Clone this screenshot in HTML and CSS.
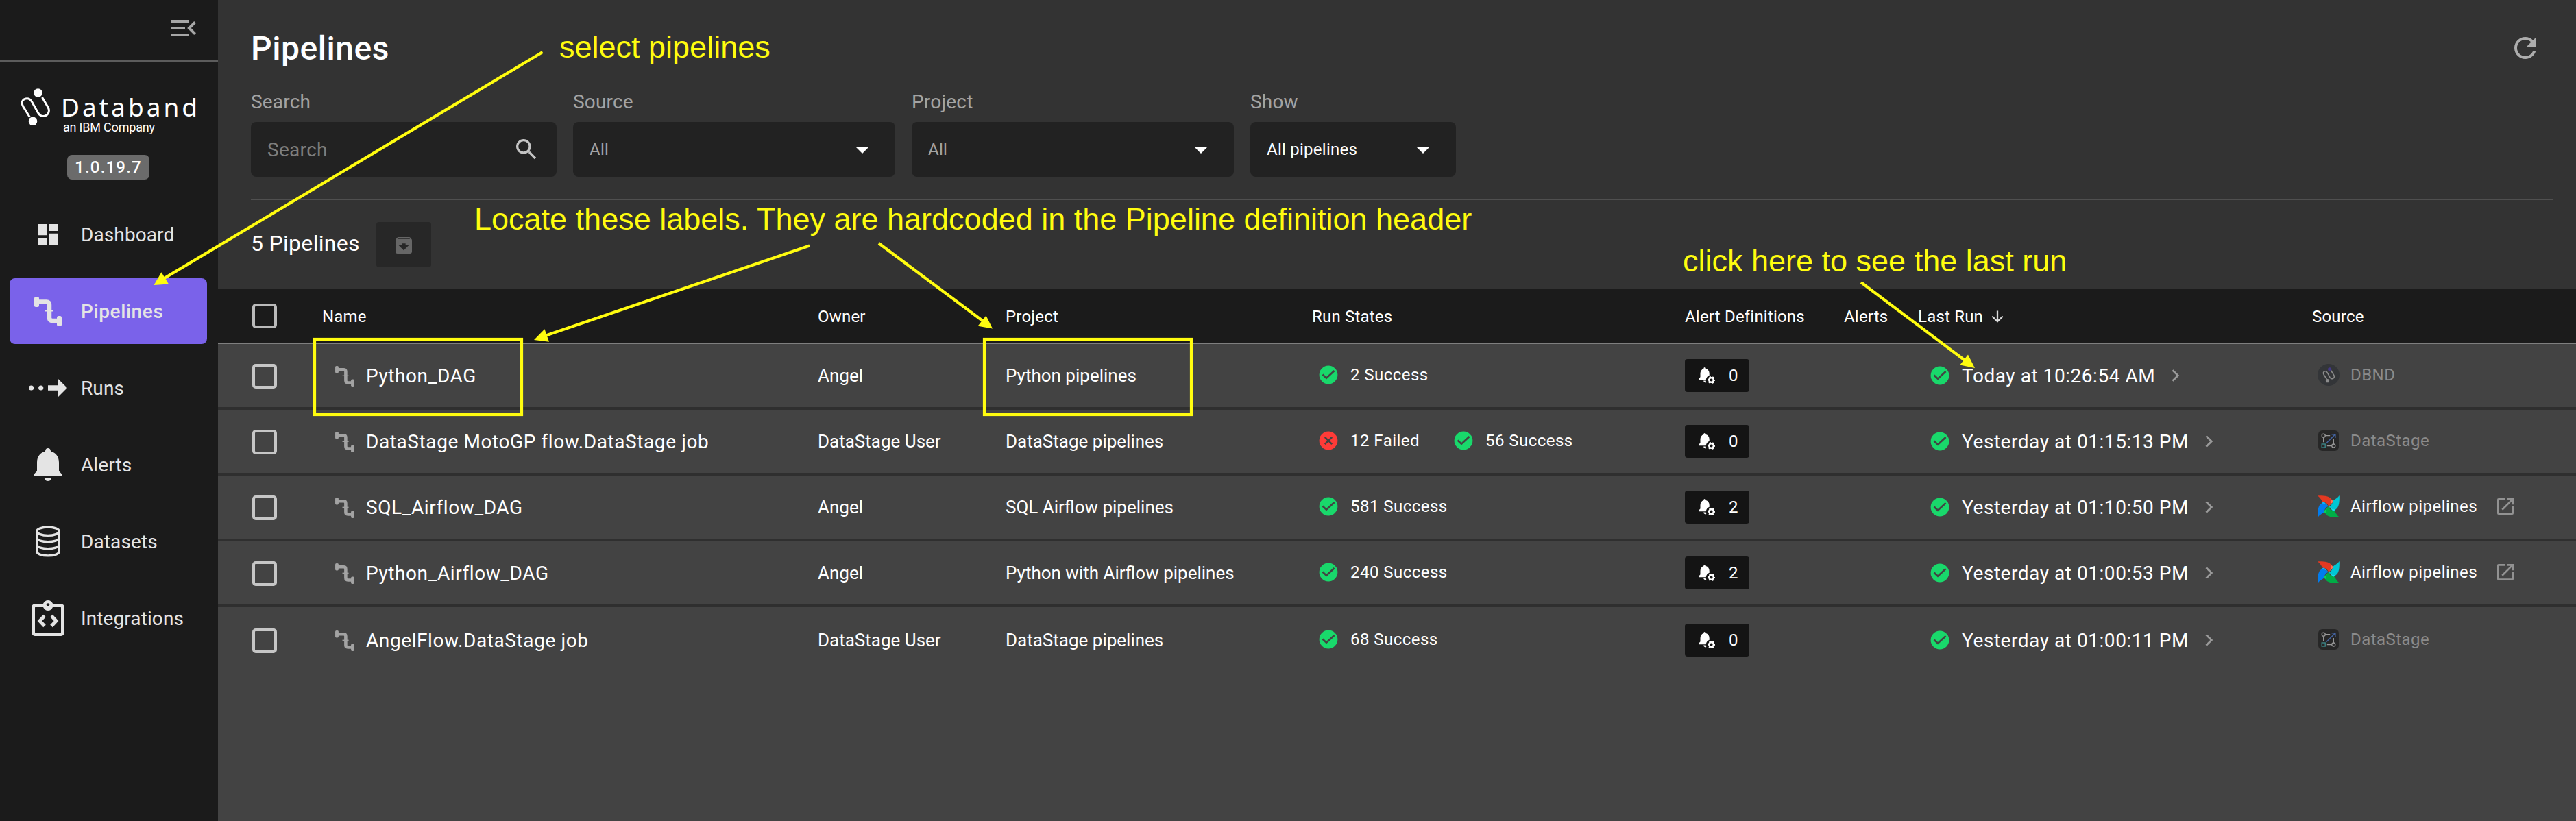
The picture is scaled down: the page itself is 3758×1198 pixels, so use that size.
FILE: index.html
```html
<!DOCTYPE html>
<html lang="en">
<head>
<meta charset="utf-8">
<title>Databand - Pipelines</title>
<link rel="stylesheet" href="styles.css">
</head>
<body>
<svg class="sprite" aria-hidden="true">
  <symbol id="pipe" viewBox="0 0 40 43">
    <path d="M4 7.5H17.500q4.500 0 4.500 4.500V30.500q0 4.500 4.500 4.500H36" fill="none" stroke="currentColor" stroke-width="6.500"/>
    <rect x="0" y="0" width="7" height="15" rx="2.500" fill="currentColor"/>
    <rect x="33" y="28" width="7" height="15" rx="2.500" fill="currentColor"/>
    <path d="M15 20.500h13" stroke="currentColor" stroke-width="2"/>
  </symbol>
  <symbol id="ok" viewBox="0 0 32 32">
    <circle cx="16" cy="16" r="13.400" fill="#19d86b"/>
    <path d="M7.500 15.500l5.500 5.300L24.600 10" fill="none" stroke="#434343" stroke-width="2.600"/>
  </symbol>
  <symbol id="fail" viewBox="0 0 32 32">
    <circle cx="16" cy="16" r="13.400" fill="#ff3b38"/>
    <path d="M10.800 10.800l10.400 10.400M21.200 10.800L10.800 21.200" stroke="#434343" stroke-width="2.600"/>
  </symbol>
  <symbol id="bellcog" viewBox="0 0 24 24">
    <path fill="#fff" d="M9 0c1.200 0 1.800.9 1.800 2.100C14 3.100 15.700 6 15.700 9.300v2.400a7.600 7.600 0 0 0-4.900 6.500H0v-1.300l2.500-2.600V9.300C2.500 6 4.200 3.100 7.300 2.100 7.300.9 7.900 0 9 0zM7.200 19.600h3.500a8 8 0 0 0 .6 2.400c-1.800 1.100-4.100-.2-4.100-2.400z"/>
    <circle cx="18.500" cy="18.500" r="3.300" fill="none" stroke="#fff" stroke-width="2.400"/>
    <circle cx="18.500" cy="18.500" r="4.600" fill="none" stroke="#fff" stroke-width="1.900" stroke-dasharray="2.408" stroke-dashoffset="1.200"/>
  </symbol>
  <symbol id="chev" viewBox="0 0 12 18"><path d="M1.500 1.200L9.300 9l-7.800 7.800" fill="none" stroke="#9a9a9a" stroke-width="2.800"/></symbol>
  <symbol id="ext" viewBox="0 0 24 24"><path fill="#929292" d="M19 19H5V5h7V3H4.500A1.500 1.500 0 0 0 3 4.500v15A1.500 1.500 0 0 0 4.500 21h15a1.500 1.500 0 0 0 1.500-1.500V12h-2v7zM14 3v2h3.590l-9.830 9.830 1.410 1.410L19 6.410V10h2V3h-7z"/></symbol>
  <symbol id="airflow" viewBox="0 0 32 32">
    <g fill="#e43921"><path id="blade" d="M0 .2C8 0 17.500.2 20.500 5.800c.4 3.400-2.400 7.400-4.500 10.200-.6-3.200-3.500-6-8.300-6.200C6 7.500 3.500 2.500 0 .2z"/></g>
    <use href="#blade" fill="#00c7d4" transform="rotate(90 16 16)"/>
    <use href="#blade" fill="#00ad46" transform="rotate(180 16 16)"/>
    <use href="#blade" fill="#017cee" transform="rotate(270 16 16)"/>
    <path d="M20.200 5.800c1.600.9 2.300 2.300 2.300 3.800L16 16c2.200-2.800 4.500-6.500 4.200-10.200z" fill="#ff7557"/>
    <path d="M20.200 5.800c1.600.9 2.300 2.300 2.300 3.800L16 16c2.200-2.800 4.500-6.500 4.200-10.200z" fill="#11e1ee" transform="rotate(90 16 16)"/>
    <path d="M20.200 5.800c1.600.9 2.300 2.300 2.300 3.800L16 16c2.200-2.800 4.500-6.500 4.200-10.200z" fill="#04d659" transform="rotate(180 16 16)"/>
    <path d="M20.200 5.800c1.600.9 2.300 2.300 2.300 3.800L16 16c2.200-2.800 4.500-6.500 4.200-10.200z" fill="#0cb6ff" transform="rotate(270 16 16)"/>
  </symbol>
  <symbol id="stage" viewBox="0 0 32 32">
    <rect x="1" y="1" width="30" height="30" rx="6" fill="#272727"/>
    <g fill="none" stroke="#999" stroke-width="1.300">
      <circle cx="8.700" cy="8.700" r="2.500"/><path d="M11.200 8.700h7M8.700 11.200v7"/>
      <circle cx="23.300" cy="23.500" r="2.500"/><path d="M20.800 23.500h-7M23.300 21v-7"/>
    </g>
    <rect x="6.200" y="21" width="5" height="5" fill="none" stroke="#3c8588" stroke-width="1.400"/>
    <path d="M13 19.500L25.500 7M20.500 6.800h5.300v5.300" fill="none" stroke="#4465a3" stroke-width="1.500"/>
  </symbol>
  <symbol id="dbnd" viewBox="0 0 32 32">
    <circle cx="16" cy="16" r="16" fill="#333538"/>
    <path d="M13.500 22.500L9 15.500c-2-3.500 2.500-7 5-3.200l4.300 7.800c2 3.400 7.500.8 5.600-3.600L19.500 9.500" fill="none" stroke="#8c8c8c" stroke-width="1.500"/>
    <circle cx="17.700" cy="7.800" r="2.600" fill="#443a86"/><circle cx="14.500" cy="24.700" r="2.600" fill="#8c8c8c"/>
  </symbol>
</svg>

<div class="app">
  <aside class="side">
    <div class="side-top">
      <svg width="48" height="48" viewBox="0 0 24 24" fill="#a6a6a6"><path d="M3 18h13v-2H3v2zm0-12v2h13V6H3zm0 7h10v-2H3v2zm18 2.590L17.420 12 21 8.410 19.590 7l-5 5 5 5L21 15.590z"/></svg>
    </div>
    <div class="brand">
      <svg width="44" height="56" viewBox="0 0 44 56">
        <path d="M13.500 42L3.800 26.500C-.5 19 4.500 14.700 9.500 14.700c2.800 0 5 1.500 6.700 4.400l9.300 16.300c2 3.500 4.600 5 7.500 5 6.500 0 10.300-6 7.300-12.400L31.500 13" fill="none" stroke="#fff" stroke-width="3"/>
        <circle cx="25.500" cy="6.500" r="6.300" fill="#fff"/><circle cx="18" cy="47.800" r="6.300" fill="#fff"/>
      </svg>
      <div class="brand-text"><span class="brand-name">Databand</span><span class="brand-sub">an IBM Company</span></div>
    </div>
    <div class="version">1.0.19.7</div>
    <nav class="nav">
      <a class="nav-item"><span class="nav-icon"><svg width="40" height="40" viewBox="0 0 24 24" fill="currentColor"><path d="M3 12.700h8V3H3v9.700zM3 21h8v-6H3v6zm10 0h8V11.200h-8V21zM13 3v6h8V3h-8z"/></svg></span>Dashboard</a>
      <a class="nav-item active"><span class="nav-icon"><svg width="40" height="43"><use href="#pipe"/></svg></span>Pipelines</a>
      <a class="nav-item"><span class="nav-icon"><svg width="56" height="28" viewBox="0 0 56 28" fill="currentColor"><circle cx="3.600" cy="14" r="3.600"/><circle cx="17.700" cy="14" r="3.600"/><path d="M28 10.300h14V0l14 14-14 14V17.700H28z"/></svg></span>Runs</a>
      <a class="nav-item"><span class="nav-icon"><svg width="42" height="48" viewBox="0 0 42 48" fill="currentColor"><path d="M21 0c2.500 0 4 1.700 4 4.600C32.500 6.500 37 12.500 37 21v12c0 1.500 5 4 5 7.500H0C0 37 5 34.500 5 33V21C5 12.500 9.500 6.500 17 4.600 17 1.700 18.500 0 21 0zM15.800 43h10.400c0 6.600-10.400 6.600-10.400 0z"/></svg></span>Alerts</a>
      <a class="nav-item"><span class="nav-icon"><svg width="36" height="46" viewBox="0 0 36 46" fill="none" stroke="currentColor" stroke-width="3.400"><ellipse cx="18" cy="8.200" rx="16.200" ry="6.200"/><path d="M1.800 8.200v29.500c0 8.200 32.400 8.200 32.400 0V8.200M1.800 17.500c0 8.200 32.400 8.200 32.400 0M1.800 27.500c0 8.200 32.400 8.200 32.400 0"/></svg></span>Datasets</a>
      <a class="nav-item"><span class="nav-icon"><svg width="48" height="52" viewBox="0 0 48 52"><rect x="2.500" y="7.500" width="43" height="42" rx="3" fill="none" stroke="currentColor" stroke-width="5"/><circle cx="24" cy="7.500" r="7.500" fill="currentColor"/><circle cx="24" cy="6.500" r="2.200" fill="#1b1b1b"/><path d="M19 22.500L12 30l7 7.500M29 22.500l7 7.500-7 7.500" fill="none" stroke="currentColor" stroke-width="5"/></svg></span>Integrations</a>
    </nav>
  </aside>

  <main class="main">
    <section class="head">
      <div class="title-row">
        <h1>Pipelines</h1>
        <svg class="refresh" width="48" height="48" viewBox="0 0 24 24" fill="#adadad"><path d="M17.650 6.350C16.200 4.900 14.210 4 12 4c-4.420 0-7.990 3.580-7.990 8s3.570 8 7.990 8c3.730 0 6.840-2.550 7.730-6h-2.080c-.82 2.330-3.040 4-5.650 4-3.310 0-6-2.690-6-6s2.690-6 6-6c1.660 0 3.140.69 4.220 1.780L13 11h7V4l-2.350 2.350z"/></svg>
      </div>
      <div class="filters">
        <div class="field search"><label>Search</label><div class="box"><span class="placeholder">Search</span>
          <svg width="40" height="40" viewBox="0 0 24 24" fill="#c4c4c4"><path d="M15.500 14h-.79l-.28-.27C15.410 12.590 16 11.110 16 9.500 16 5.910 13.090 3 9.500 3S3 5.910 3 9.500 5.910 16 9.500 16c1.610 0 3.090-.59 4.230-1.570l.27.28v.79l5 4.990L20.490 19l-4.990-5zm-6 0C7.010 14 5 11.990 5 9.500S7.010 5 9.500 5 14 7.010 14 9.500 11.990 14 9.500 14z"/></svg></div></div>
        <div class="field wide"><label>Source</label><div class="box select"><span>All</span><i class="caret"></i></div></div>
        <div class="field wide"><label>Project</label><div class="box select"><span>All</span><i class="caret"></i></div></div>
        <div class="field show"><label>Show</label><div class="box select set"><span>All pipelines</span><i class="caret"></i></div></div>
      </div>
      <div class="toolbar">
        <span class="count">5 Pipelines</span>
        <button class="archive"><svg width="32" height="32" viewBox="0 0 24 24" fill="#666"><path d="M20.540 5.230l-1.390-1.680C18.880 3.210 18.470 3 18 3H6c-.47 0-.88.21-1.160.55L3.460 5.230C3.170 5.570 3 6.020 3 6.500V19c0 1.100.9 2 2 2h14c1.100 0 2-.9 2-2V6.500c0-.48-.17-.93-.46-1.270zM12 17.500L6.500 12H10v-2h4v2h3.500L12 17.500zM5.120 5l.81-1h12l.94 1H5.120z"/></svg></button>
      </div>
    </section>

    <section class="table">
      <div class="row thead">
        <div class="cell check"><i class="cb"></i></div>
        <div class="cell name">Name</div><div class="cell">Owner</div><div class="cell">Project</div><div class="cell">Run States</div><div class="cell">Alert Definitions</div><div class="cell">Alerts</div>
        <div class="cell sorted">Last Run<svg width="18" height="18" viewBox="0 0 18 18"><path d="M9 .5v16M1.300 8.500L9 16.200l7.700-7.700" fill="none" stroke="#dcdcdc" stroke-width="2.300"/></svg></div>
        <div class="cell">Source</div>
      </div>

      <div class="row">
        <div class="cell check"><i class="cb"></i></div>
        <div class="cell name"><svg width="28" height="30"><use href="#pipe"/></svg>Python_DAG</div>
        <div class="cell">Angel</div><div class="cell">Python pipelines</div>
        <div class="cell states"><span class="state"><svg><use href="#ok"/></svg>2 Success</span></div>
        <div class="cell"><span class="badge"><svg><use href="#bellcog"/></svg>0</span></div><div class="cell"></div>
        <div class="cell last"><svg class="s32"><use href="#ok"/></svg><span>Today at 10:26:54 AM</span><svg class="chev"><use href="#chev"/></svg></div>
        <div class="cell source muted"><svg class="s32"><use href="#dbnd"/></svg>DBND</div>
      </div>
      <div class="row">
        <div class="cell check"><i class="cb"></i></div>
        <div class="cell name"><svg width="28" height="30"><use href="#pipe"/></svg>DataStage MotoGP flow.DataStage job</div>
        <div class="cell">DataStage User</div><div class="cell">DataStage pipelines</div>
        <div class="cell states"><span class="state"><svg><use href="#fail"/></svg>12 Failed</span><span class="state"><svg><use href="#ok"/></svg>56 Success</span></div>
        <div class="cell"><span class="badge"><svg><use href="#bellcog"/></svg>0</span></div><div class="cell"></div>
        <div class="cell last"><svg class="s32"><use href="#ok"/></svg><span>Yesterday at 01:15:13 PM</span><svg class="chev"><use href="#chev"/></svg></div>
        <div class="cell source muted"><svg class="s32"><use href="#stage"/></svg>DataStage</div>
      </div>
      <div class="row">
        <div class="cell check"><i class="cb"></i></div>
        <div class="cell name"><svg width="28" height="30"><use href="#pipe"/></svg>SQL_Airflow_DAG</div>
        <div class="cell">Angel</div><div class="cell">SQL Airflow pipelines</div>
        <div class="cell states"><span class="state"><svg><use href="#ok"/></svg>581 Success</span></div>
        <div class="cell"><span class="badge"><svg><use href="#bellcog"/></svg>2</span></div><div class="cell"></div>
        <div class="cell last"><svg class="s32"><use href="#ok"/></svg><span>Yesterday at 01:10:50 PM</span><svg class="chev"><use href="#chev"/></svg></div>
        <div class="cell source"><svg class="s32"><use href="#airflow"/></svg>Airflow pipelines<svg class="s32 ext"><use href="#ext"/></svg></div>
      </div>
      <div class="row">
        <div class="cell check"><i class="cb"></i></div>
        <div class="cell name"><svg width="28" height="30"><use href="#pipe"/></svg>Python_Airflow_DAG</div>
        <div class="cell">Angel</div><div class="cell">Python with Airflow pipelines</div>
        <div class="cell states"><span class="state"><svg><use href="#ok"/></svg>240 Success</span></div>
        <div class="cell"><span class="badge"><svg><use href="#bellcog"/></svg>2</span></div><div class="cell"></div>
        <div class="cell last"><svg class="s32"><use href="#ok"/></svg><span>Yesterday at 01:00:53 PM</span><svg class="chev"><use href="#chev"/></svg></div>
        <div class="cell source"><svg class="s32"><use href="#airflow"/></svg>Airflow pipelines<svg class="s32 ext"><use href="#ext"/></svg></div>
      </div>
      <div class="row last-row">
        <div class="cell check"><i class="cb"></i></div>
        <div class="cell name"><svg width="28" height="30"><use href="#pipe"/></svg>AngelFlow.DataStage job</div>
        <div class="cell">DataStage User</div><div class="cell">DataStage pipelines</div>
        <div class="cell states"><span class="state"><svg><use href="#ok"/></svg>68 Success</span></div>
        <div class="cell"><span class="badge"><svg><use href="#bellcog"/></svg>0</span></div><div class="cell"></div>
        <div class="cell last"><svg class="s32"><use href="#ok"/></svg><span>Yesterday at 01:00:11 PM</span><svg class="chev"><use href="#chev"/></svg></div>
        <div class="cell source muted"><svg class="s32"><use href="#stage"/></svg>DataStage</div>
      </div>
    </section>
  </main>
</div>

<!-- tutorial annotations drawn over the page -->
<svg class="notes" width="3758" height="1198" viewBox="0 0 3758 1198">
  <g fill="none" stroke="#fffc0f" stroke-width="4.200">
    <path d="M791.500 76L238 407"/>
    <path d="M1181 358.500L795 490"/>
    <path d="M1282 355L1436 470"/>
    <path d="M2715 412L2868 527"/>
    <rect x="459" y="495" width="302" height="110"/>
    <rect x="1436" y="495" width="302" height="110"/>
  </g>
  <g fill="#fffc0f">
    <path d="M224.500 416L235.500 397.200L246 414.400z"/>
    <path d="M779 496L794.500 480.300L801 498.800z"/>
    <path d="M1448 479.500L1438.500 460.500L1426.500 475.700z"/>
    <path d="M2881 537L2871 517.500L2859.300 532.500z"/>
  </g>
  <g class="note-text">
    <text x="816" y="84">select pipelines</text>
    <text x="692" y="334.500">Locate these labels. They are hardcoded in the Pipeline definition header</text>
    <text x="2455" y="395.500">click here to see the last run</text>
  </g>
</svg>
</body>
</html>
```
FILE: styles.css
```css
* { box-sizing: border-box; }
body { margin: 0; background: #434343; color: #fff; font-family: Roboto, "Liberation Sans", sans-serif; overflow: hidden; }
svg { display: block; flex: none; }
.sprite { position: absolute; width: 0; height: 0; }
.app { display: flex; width: 3758px; height: 1198px; }

/* sidebar */
.side { width: 318px; background: #1b1b1b; flex: none; }
.side-top { height: 90px; border-bottom: 2px solid #5c5c5c; display: flex; justify-content: flex-end; padding: 17px 26px 0 0; }
.brand { display: flex; padding: 39px 0 0 30px; gap: 15px; height: 105px; }
.brand-text { display: flex; flex-direction: column; gap: 2px; padding-top: 9px; white-space: nowrap; }
.brand-name { font: 37px/36px "Noto Sans", sans-serif; letter-spacing: 4px; }
.brand-sub { font-size: 18px; line-height: 20px; letter-spacing: -.2px; padding-left: 3px; }
.version { width: 120px; height: 36px; margin: 31px 0 32px 98px; border-radius: 7px; background: #6b6b6b; text-align: center; font-size: 24px; font-weight: 500; line-height: 37px; letter-spacing: 1.2px; }
.nav { display: flex; flex-direction: column; gap: 16px; padding: 0 16px 0 14px; }
.nav-item { height: 96px; border-radius: 8px; display: flex; align-items: center; gap: 20px; padding-left: 28px; color: #e4e4e4; font-size: 28px; letter-spacing: .1px; }
.nav-item.active { background: #7a62ea; font-weight: 500; letter-spacing: .6px; }
.nav-icon { width: 56px; display: flex; justify-content: center; }

/* page head */
.main { flex: 1; min-width: 0; background: #434343; }
.head { background: #333; height: 422px; padding: 40px 34px 0 48px; }
.title-row { display: flex; justify-content: space-between; align-items: center; height: 62px; }
h1 { margin: 0; font-size: 48px; font-weight: 500; line-height: 62px; letter-spacing: .55px; }
.refresh { margin: -2px 16px 0 0; }
.filters { display: flex; gap: 24px; padding: 31px 0 32px; border-bottom: 2px solid #505050; }
.field label { display: block; color: #a3a3a3; font-size: 28px; line-height: 32px; letter-spacing: .18px; margin-bottom: 13px; }
.search { width: 446px; }
.wide { width: 470px; }
.show { width: 300px; }
.box { height: 80px; background: #222; border-radius: 8px; display: flex; align-items: center; justify-content: space-between; padding: 0 24px; }
.placeholder { color: #7d7d7d; font-size: 28px; letter-spacing: .3px; }
.select { padding-right: 38px; color: #a3a3a3; font-size: 24px; letter-spacing: .25px; }
.set { color: #fff; }
.caret { border: 10px solid transparent; border-top-color: #fff; border-bottom: 0; margin-top: 2px; }
.toolbar { display: flex; align-items: center; height: 130px; }
.count { font-size: 32px; letter-spacing: .3px; width: 183px; margin-top: -4px; }
.archive { width: 80px; height: 66px; border: 0; border-radius: 4px; background: #272727; display: flex; align-items: center; justify-content: center; padding: 2px 0 0; }

/* table */
.row { display: grid; grid-template-columns: 135px 740px 274px 447px 544px 232px 108px 575px 385px; height: 96px; }
.cell { display: flex; align-items: center; white-space: nowrap; font-size: 26px; border-bottom: 4px solid #2f2f2f; }
.last-row .cell { border-bottom: 0; }
.thead { height: 80px; background: #1b1b1b; border-bottom: 2px solid #7f7f7f; }
.thead .cell { border: 0; font-size: 24px; letter-spacing: .2px; padding-top: 2px; }
.check { padding-left: 50px; }
.cb { width: 36px; height: 36px; border: 4px solid #c6c6c6; border-radius: 5px; margin-top: 2px; }
.thead .cb { border-color: #bababa; margin-top: -2px; }
.row .name { font-size: 28px; letter-spacing: .59px; padding-left: 36px; gap: 17px; }
.name svg { color: #a3a3a3; margin-top: 2px; }
.thead .name { font-size: 24px; letter-spacing: .2px; padding-left: 17px; }
.states { padding-left: 8px; gap: 48px; }
.state { display: flex; align-items: center; gap: 16px; font-size: 24px; letter-spacing: .46px; margin-top: -2px; }
.state svg { width: 32px; height: 32px; }
.badge { width: 94px; height: 48px; background: #141414; border-radius: 4px; display: flex; align-items: center; gap: 20px; padding-left: 20px; font-size: 24px; }
.badge svg { width: 24px; height: 24px; }
.s32 { width: 32px; height: 32px; }
.last { padding-left: 16px; gap: 16px; }
.row .last { font-size: 28px; letter-spacing: .55px; }
.chev { width: 12px; height: 18px; margin-left: 8px; }
.sorted { gap: 12px; }
.sorted svg { margin-top: 0; }
.row .source { font-size: 24px; letter-spacing: .46px; padding: 0 0 3px 8px; gap: 16px; }
.muted { color: #8b8b8b; }
.source .ext { margin-left: 9px; }

/* annotations */
.notes { position: absolute; left: 0; top: 0; }
.note-text { font: 45px "Liberation Sans", sans-serif; fill: #fffc0f; }
```
